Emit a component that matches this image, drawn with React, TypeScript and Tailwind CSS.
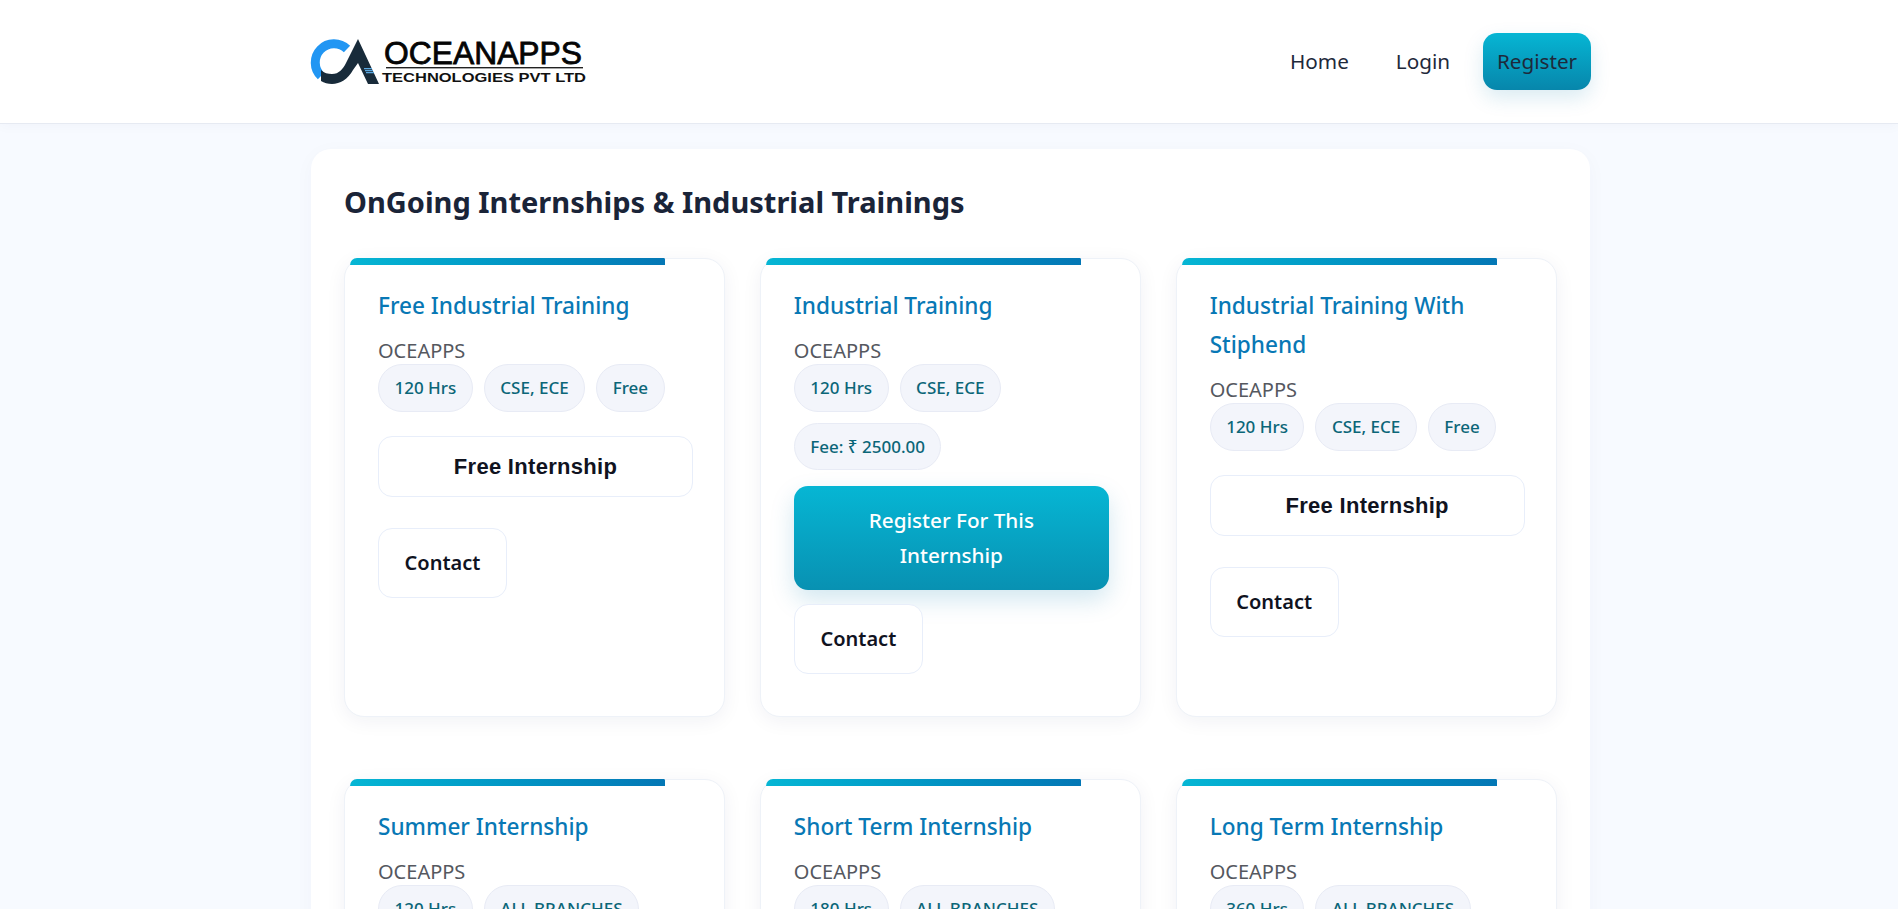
import React from 'react';

interface Internship {
  title: string;
  chips: string[];
  fee?: boolean;
}

const rows: Internship[] = [
  { title: 'Free Industrial Training', chips: ['120 Hrs', 'CSE, ECE', 'Free'] },
  { title: 'Industrial Training', chips: ['120 Hrs', 'CSE, ECE', 'Fee: ₹ 2500.00'], fee: true },
  { title: 'Industrial Training With Stiphend', chips: ['120 Hrs', 'CSE, ECE', 'Free'] },
  { title: 'Summer Internship', chips: ['120 Hrs', 'ALL BRANCHES', 'Free'] },
  { title: 'Short Term Internship', chips: ['180 Hrs', 'ALL BRANCHES', 'Free'] },
  { title: 'Long Term Internship', chips: ['360 Hrs', 'ALL BRANCHES', 'Free'] },
];

const Logo = () => (
  <svg width="280" height="60" viewBox="0 0 280 60" className="block overflow-visible">
    <path d="M10 44A18.5 18.5 0 1 1 36 17" fill="none" stroke="#2196f3" strokeWidth="9" />
    <path d="M10 38C13 41 17 42 21 42C28 42 32 37 35 31L47 7L68 52H57L47 31L42 38C37 47 29 52 21 52C17 52 13 51 10 49Z" fill="#182b3a" />
    <path d="M53 36h8v1.2H53Zm1 2h8v1.2H54Zm1 2h8v1.2H55Z" fill="#5ba8e0" />
    <text x="73" y="32" fontFamily="Liberation Sans, sans-serif" fontSize="32" stroke="#050505" strokeWidth="0.8" textLength="198" lengthAdjust="spacingAndGlyphs" fill="#050505">OCEANAPPS</text>
    <rect x="75" y="35" width="197" height="1.4" fill="#222" />
    <text x="71" y="50" fontFamily="Liberation Sans, sans-serif" fontSize="13.5" fontWeight="700" textLength="204" lengthAdjust="spacingAndGlyphs" fill="#111">TECHNOLOGIES PVT LTD</text>
  </svg>
);

const Card = ({ item }: { item: Internship }) => (
  <div className="relative flex flex-col items-start bg-white rounded-[20px] border border-[#eef2f8] shadow-[0_4px_20px_rgba(20,40,80,0.06)] px-[33px] pt-[27px] pb-[42px]">
    <span className="absolute left-[5px] -top-px w-[315px] h-[7px] rounded-tl-[20px] rounded-tr-[4px] bg-gradient-to-r from-[#06b6d4] to-[#0477b5]" />
    <h3 className="text-[22.6px] leading-[39px] font-medium text-[#0878b5] mb-[13px]">{item.title}</h3>
    <p className="text-[20px] leading-[26px] text-[#55585f]">OCEAPPS</p>
    <div className="flex flex-wrap gap-[11px] mb-[16px]">
      {item.chips.map((chip) => (
        <span key={chip} className="flex items-center h-[47.5px] px-[15.5px] rounded-full bg-[#f3f5fb] border border-[#e8ebf5] text-[17px] font-medium text-[#0b6678]">
          {chip}
        </span>
      ))}
    </div>
    {item.fee ? (
      <button className="w-[315px] h-[104px] px-[40px] rounded-[14px] bg-gradient-to-b from-[#06b6d4] to-[#0891b2] shadow-[0_10px_24px_rgba(8,120,170,0.18)] text-white text-[20.7px] leading-[35px] font-medium">
        Register For This Internship
      </button>
    ) : (
      <div className="flex items-center justify-center w-[315px] h-[61px] mt-[8px] rounded-[14px] bg-white border border-[#e8eefa] font-['Liberation_Sans',sans-serif] font-bold text-[22px] tracking-[0.3px] text-[#10131f]">
        Free Internship
      </div>
    )}
    <button className={`${item.fee ? 'mt-[14px]' : 'mt-[31px]'} w-[129px] h-[70px] rounded-[14px] bg-white border border-[#e8eefa] text-[20px] font-semibold text-[#10131f]`}>
      Contact
    </button>
  </div>
);

export default function App() {
  return (
    <div className="font-['Noto_Sans',sans-serif] h-[909px] overflow-hidden bg-[#f7faff] text-[#1e293b]">
      <header className="h-[124px] bg-white border-b border-[#e6eaf2] shadow-[0_2px_12px_rgba(20,40,80,0.03)]">
        <div className="flex items-center justify-between w-[1280px] h-full ml-[311px]">
          <Logo />
          <nav className="flex items-center text-[20.7px]">
            <a className="mr-[47px]">Home</a>
            <a className="mr-[33px]">Login</a>
            <a className="flex items-center justify-center w-[108px] h-[57px] rounded-[14px] bg-gradient-to-b from-[#06b6d4] to-[#0786ab] shadow-[0_8px_20px_rgba(8,120,170,0.15)]">Register</a>
          </nav>
        </div>
      </header>
      <main className="w-[1279px] ml-[311px] mt-[25px] pt-[33px] px-[33px] rounded-[20px] bg-white shadow-[0_4px_20px_rgba(20,40,80,0.03)]">
        <h2 className="text-[29px] leading-[40px] font-bold text-[#1a2438] mb-[36px]">OnGoing Internships &amp; Industrial Trainings</h2>
        <div className="grid grid-cols-3 gap-x-[34.5px] gap-y-[62px]">
          {rows.map((item) => (
            <Card key={item.title} item={item} />
          ))}
        </div>
      </main>
    </div>
  );
}
